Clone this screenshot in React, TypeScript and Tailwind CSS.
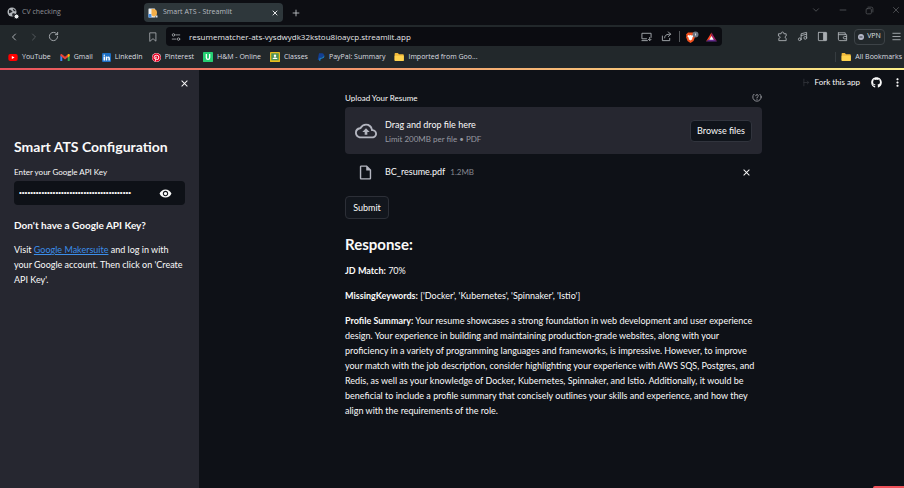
import type { ReactNode } from 'react';
import {
  ChevronDown,
  ChevronLeft,
  ChevronRight,
  Menu,
  Minus,
  Plus,
  RotateCw,
  X,
} from 'lucide-react';
import { FaGithub, FaPinterest } from 'react-icons/fa';
import {
  MdClose,
  MdMoreVert,
  MdOutlineCloudUpload,
  MdOutlineInsertDriveFile,
  MdVisibility,
} from 'react-icons/md';

function Line({ children, className = 'size-[11px]' }: { children: ReactNode; className?: string }) {
  return (
    <svg
      viewBox="0 0 24 24"
      className={className}
      fill="none"
      stroke="currentColor"
      strokeWidth="2"
      strokeLinecap="round"
      strokeLinejoin="round"
      aria-hidden="true"
    >
      {children}
    </svg>
  );
}

function GlobeIcon() {
  return (
    <svg viewBox="0 0 24 24" className="size-[12px]" aria-hidden="true">
      <circle cx="10" cy="10" r="9" fill="#b3b7bb" />
      <path d="M4 6c3-1 4 1 6 2s0 3-2 3-2 3-4 1zM12 3c1 2 4 2 5 4s-2 2-3 1-3-2-2-5zM11 13c2-1 5 0 5 1s-2 4-4 4-2-4-1-5z" fill="#22252a" />
      <circle cx="19" cy="19" r="5" fill="#e9ebed" stroke="#0e1014" strokeWidth="2" />
    </svg>
  );
}

function PageIcon() {
  return (
    <svg viewBox="0 0 20 20" className="size-[10px]" aria-hidden="true">
      <rect x="1" y="1" width="13" height="18" rx="1" fill="#eef2f7" />
      <path d="M1 12h6v7H1z" fill="#4a90e2" />
      <path d="M7 2c7-1 11 1 11 7s-2 8-6 8-6-4-5-8z" fill="#f4b04a" />
      <path d="M15 15h4v4h-4z" fill="#dfe7f3" />
    </svg>
  );
}

function YouTubeIcon() {
  return (
    <svg viewBox="0 0 24 18" className="h-[7px] w-[10px]" aria-hidden="true">
      <rect width="24" height="18" rx="5" fill="#f00" />
      <path d="M9 5v8l7-4z" fill="#fff" />
    </svg>
  );
}

function GmailIcon() {
  return (
    <svg viewBox="0 0 24 18" className="h-[7px] w-[10px]" aria-hidden="true">
      <path d="M0 3v15h5V7z" fill="#4285f4" />
      <path d="M24 3v15h-5V7z" fill="#34a853" />
      <path d="M0 3c0-3 3-4 5-2l7 6 7-6c2-2 5-1 5 2l-1 2-11 9L1 5z" fill="#ea4335" />
      <path d="M19 1c2-2 5-1 5 2v2l-5 4z" fill="#fbbc04" />
    </svg>
  );
}

function LinkedInIcon() {
  return (
    <svg viewBox="0 0 24 24" className="size-[9px]" aria-hidden="true">
      <rect width="24" height="24" rx="3" fill="#1c6fc4" />
      <path d="M4 9h4v11H4zM10 9h4v2c2-3 7-3 7 3v6h-4v-6c0-3-3-2-3 0v6h-4z" fill="#fff" />
      <circle cx="6" cy="6" r="2" fill="#fff" />
    </svg>
  );
}

function LetterUIcon() {
  return (
    <svg viewBox="0 0 24 24" className="size-[10px]" aria-hidden="true">
      <rect width="24" height="24" rx="2" fill="#25cf72" />
      <path d="M8 5v8c0 6 8 6 8 0V5" fill="none" stroke="#fff" strokeWidth="3" />
    </svg>
  );
}

function ClassroomIcon() {
  return (
    <svg viewBox="0 0 24 24" className="size-[10px]" aria-hidden="true">
      <rect width="24" height="24" rx="2" fill="#e9bd1c" />
      <rect x="3" y="3" width="18" height="17" fill="#4f9455" />
      <circle cx="12" cy="9" r="3" fill="#fff" />
      <path d="M6 17c0-5 12-5 12 0z" fill="#fff" />
    </svg>
  );
}

function PayPalIcon() {
  return (
    <svg viewBox="0 0 24 24" className="size-[8px]" aria-hidden="true">
      <path d="M6 1h9c5 0 7 4 5 8-1 4-4 5-8 5H9l-1 7H2z" fill="#123f94" />
      <path d="M21 6c3 6-1 11-8 11h-2l-1 6H6l2-9h4c5 0 8-2 9-8z" fill="#1b84d0" />
    </svg>
  );
}

function FolderIcon() {
  return (
    <svg viewBox="0 0 24 20" className="h-[8px] w-[10px]" aria-hidden="true">
      <path d="M1 2c0-1 1-2 2-2h6l3 3h10c1 0 2 1 2 2v13c0 1-1 2-2 2H3c-1 0-2-1-2-2z" fill="#f0b93a" />
      <path d="M1 7h23v11c0 1-1 2-2 2H3c-1 0-2-1-2-2z" fill="#ffd34f" />
    </svg>
  );
}

function BraveIcon() {
  return (
    <svg viewBox="0 0 28 24" className="h-[12px] w-[14px]" aria-hidden="true">
      <path d="M6 3h10l4 4-1 3 1 2-3 8-6 4-6-4-3-8 1-2-1-3z" fill="#f4511e" />
      <path d="M6 8l3 1 2-1 2 1 3-1 1 3-3 3 1 2-4 3-4-3 1-2-3-3z" fill="#fff" />
      <circle cx="21" cy="7" r="6" fill="#6d7581" />
      <path d="M21 5v4" stroke="#d5d9de" strokeWidth="2" />
    </svg>
  );
}

function BatIcon() {
  return (
    <svg viewBox="0 0 24 22" className="h-[10px] w-[11px]" aria-hidden="true">
      <path d="M12 1L0 21l12-8z" fill="#ff4724" />
      <path d="M12 1l12 20-12-8z" fill="#9e1f63" />
      <path d="M0 21h24l-12-8z" fill="#662d91" />
      <path d="M12 9l5 8H7z" fill="#fff" />
    </svg>
  );
}

const bookmarks: { label: string; icon: ReactNode }[] = [
  { label: 'YouTube', icon: <YouTubeIcon /> },
  { label: 'Gmail', icon: <GmailIcon /> },
  { label: 'LinkedIn', icon: <LinkedInIcon /> },
  { label: 'Pinterest', icon: <FaPinterest className="size-[9px] rounded-full bg-white text-[#e60023]" /> },
  { label: 'H&M - Online', icon: <LetterUIcon /> },
  { label: 'Classes', icon: <ClassroomIcon /> },
  { label: 'PayPal: Summary', icon: <PayPalIcon /> },
  { label: 'Imported from Goo...', icon: <FolderIcon /> },
];

function TabStrip() {
  return (
    <div className="flex h-[25px] items-center bg-[#0d0e13] text-[7px] text-[#8d9196]">
      <button className="flex h-[19px] w-[144px] shrink-0 items-center gap-[3px] pl-[7px]">
        <GlobeIcon />
        CV checking
      </button>
      <div className="flex h-[19px] w-[139px] shrink-0 items-center rounded-[4px] bg-[#2e373b] px-[4px] text-[#b9bdc1]">
        <button className="flex flex-1 items-center gap-[5px]">
          <PageIcon />
          Smart ATS - Streamlit
        </button>
        <button aria-label="Close tab">
          <X className="size-[8px] text-[#e2e4e6]" strokeWidth={3} />
        </button>
      </div>
      <button aria-label="New tab" className="ml-[8px]">
        <Plus className="size-[10px] text-[#c9ccd0]" />
      </button>
      <div className="ml-auto flex items-center gap-[17px] self-start pt-[5px] pr-[3px] text-[#55585c]">
        <button aria-label="Search tabs"><ChevronDown className="size-[10px]" /></button>
        <button aria-label="Minimize"><Minus className="size-[10px]" /></button>
        <button aria-label="Restore">
          <Line className="size-[9px]">
            <rect x="3" y="7" width="14" height="14" rx="3" />
            <path d="M8 3h9a4 4 0 0 1 4 4v9" />
          </Line>
        </button>
        <button aria-label="Close window"><X className="size-[10px]" /></button>
      </div>
    </div>
  );
}

function Toolbar() {
  return (
    <div className="flex h-[23px] items-center text-[#a9adb1]">
      <div className="flex w-[158px] shrink-0 items-center gap-[8px] pl-[8px]">
        <button aria-label="Back"><ChevronLeft className="size-[12px]" /></button>
        <button aria-label="Forward" className="text-[#54595d]"><ChevronRight className="size-[12px]" /></button>
        <button aria-label="Reload"><RotateCw className="size-[11px]" /></button>
        <button aria-label="Bookmark this page" className="ml-auto">
          <Line className="size-[10px]">
            <path d="M5 2h14v20l-7-6-7 6z" />
          </Line>
        </button>
      </div>
      <div className="ml-[8px] flex h-[19px] w-[556px] items-center rounded-[4px] bg-[#0b0c11] px-[5px]">
        <Line className="size-[10px]">
          <circle cx="6" cy="7" r="3" />
          <path d="M12 7h9M3 17h9" />
          <circle cx="18" cy="17" r="3" />
        </Line>
        <input
          aria-label="Address"
          defaultValue="resumematcher-ats-vysdwydk32kstou8ioaycp.streamlit.app"
          className="ml-[8px] min-w-0 flex-1 bg-transparent text-[8px] text-[#e6e8ea] outline-none"
        />
        <div className="flex items-center gap-[9px]">
          <button aria-label="Install app">
            <Line>
              <path d="M12 17H2V5h20v9M2 21h12M19 14v6M16 18l3 3 3-3" />
            </Line>
          </button>
          <button aria-label="Share">
            <Line>
              <path d="M3 11v10h16v-5M8 15c0-6 4-8 13-8M16 2l5 5-5 5" />
            </Line>
          </button>
          <span className="-mx-[2px] h-[11px] w-px bg-[#55585c]" />
          <button aria-label="Shields" className="-mx-[2px]"><BraveIcon /></button>
          <button aria-label="Rewards"><BatIcon /></button>
        </div>
      </div>
      <div className="ml-auto flex shrink-0 items-center gap-[9px] pr-[2px]">
        <button aria-label="Extensions">
          <Line>
            <path d="M4 6h5c-1-5 7-5 6 0h5v5c-3 0-3 5 0 5v5H4v-5c4 0 4-5 0-5z" />
          </Line>
        </button>
        <button aria-label="Media">
          <Line>
            <path d="M9 18V6l12-3v12M9 10l12-3" />
            <circle cx="6" cy="18" r="3" />
            <circle cx="18" cy="15" r="3" />
          </Line>
        </button>
        <button aria-label="Side panel">
          <Line>
            <rect x="3" y="3" width="18" height="18" rx="1" />
            <path d="M15 4h5v16h-5z" fill="currentColor" />
          </Line>
        </button>
        <button aria-label="Wallet">
          <Line>
            <path d="M3 4h15v4M3 4v14c0 2 1 3 3 3h15V8H3M21 12h-5c-3 0-3 5 0 5h5" />
          </Line>
        </button>
        <button className="-mx-[3px] flex h-[16px] w-[31px] items-center justify-center gap-[3px] rounded-[4px] border border-[#3d4347] text-[7px] text-[#dfe1e3]">
          <svg viewBox="0 0 12 12" className="size-[6px]" aria-hidden="true">
            <circle cx="6" cy="6" r="6" fill="#b4b8c8" />
            <path d="M3 6h6" stroke="#353b45" strokeWidth="2" />
          </svg>
          VPN
        </button>
        <button aria-label="Menu"><Menu className="size-[11px]" /></button>
      </div>
    </div>
  );
}

function BookmarksBar() {
  return (
    <nav aria-label="Bookmarks" className="flex h-[20px] items-center gap-[9px] pb-[2px] pl-[8px] text-[7px] text-[#dcdee0]">
      {bookmarks.map((b) => (
        <a key={b.label} href="#" className="flex shrink-0 items-center gap-[4px] whitespace-nowrap">
          {b.icon}
          {b.label}
        </a>
      ))}
      <a href="#" className="ml-auto flex shrink-0 items-center gap-[4px] border-l border-[#363c40] pr-[2px] pl-[5px] whitespace-nowrap">
        <FolderIcon />
        All Bookmarks
      </a>
    </nav>
  );
}

function Sidebar() {
  return (
    <aside className="w-[199px] shrink-0 bg-[#262730] px-[14px] pt-[8px]">
      <div className="-mr-[5px] flex justify-end">
        <button aria-label="Close sidebar"><MdClose className="size-[11px]" /></button>
      </div>
      <h1 className="mt-[48px] text-[14px] leading-[20px] font-bold whitespace-nowrap">Smart ATS Configuration</h1>
      <label htmlFor="api-key" className="mt-[9px] block text-[8px] leading-[12px]">
        Enter your Google API Key
      </label>
      <div className="mt-[3px] flex h-[24px] items-center rounded-[4px] bg-[#0e1117] pr-[13px] pl-[5px]">
        <input
          id="api-key"
          type="password"
          defaultValue="0000000000000000000000000000000000000000"
          className="min-w-0 flex-1 bg-transparent font-['Liberation_Sans',sans-serif] text-[8px] outline-none"
        />
        <button aria-label="Show key"><MdVisibility className="size-[13px]" /></button>
      </div>
      <h2 className="mt-[13px] text-[10px] leading-[15px] font-bold">Don't have a Google API Key?</h2>
      <p className="mt-[9px] text-[9px] leading-[15px]">
        Visit <a href="#" className="text-[#3b8eea] underline">Google Makersuite</a> and log in with your Google account.
        Then click on 'Create API Key'.
      </p>
    </aside>
  );
}

function Uploader() {
  return (
    <section>
      <div className="flex h-[13px] items-start justify-between">
        <label htmlFor="browse" className="text-[8px] leading-[9px]">Upload Your Resume</label>
        <button aria-label="Help" className="flex h-[8px] items-end overflow-hidden text-[#a3a5ab]">
          <Line className="size-[10px] shrink-0">
            <circle cx="12" cy="12" r="10" />
            <path d="M9 9a3 3 0 1 1 4 3l-1 2M12 17v1" />
          </Line>
        </button>
      </div>
      <div className="flex h-[47px] items-center rounded-[4px] bg-[#262730] px-[10px]">
        <MdOutlineCloudUpload className="size-[22px] text-[#b4b6c0]" />
        <div className="ml-[8px] flex-1 pt-[2px]">
          <p className="text-[9px] leading-[15px]">Drag and drop file here</p>
          <p className="text-[8px] leading-[14px] text-[#9799a1]">Limit 200MB per file • PDF</p>
        </div>
        <button id="browse" className="h-[22px] w-[62px] rounded-[4px] border border-[#31343d] bg-[#10141b] text-[9px]">
          Browse files
        </button>
      </div>
      <div className="mt-[9px] flex h-[18px] items-center pr-[10px] pl-[12px]">
        <MdOutlineInsertDriveFile className="size-[17px] text-[#b4b6c0]" />
        <span className="ml-[11px] text-[9px]">BC_resume.pdf</span>
        <span className="ml-[5px] text-[8px] text-[#85878f]">1.2MB</span>
        <button aria-label="Remove file" className="ml-auto"><MdClose className="size-[11px]" /></button>
      </div>
    </section>
  );
}

function Response() {
  return (
    <section className="text-[9px] leading-[15px]">
      <h2 className="text-[15px] leading-[20px] font-bold">Response:</h2>
      <p className="mt-[9px]"><strong>JD Match:</strong> 70%</p>
      <p className="mt-[10px]">
        <strong>MissingKeywords:</strong> ['Docker', 'Kubernetes', 'Spinnaker', 'Istio']
      </p>
      <p className="mt-[10px]">
        <strong>Profile Summary:</strong> Your resume showcases a strong foundation in web development and user
        experience design. Your experience in building and maintaining production-grade websites, along with your
        proficiency in a variety of programming languages and frameworks, is impressive. However, to improve your match
        with the job description, consider highlighting your experience with AWS SQS, Postgres, and Redis, as well as
        your knowledge of Docker, Kubernetes, Spinnaker, and Istio. Additionally, it would be beneficial to include a
        profile summary that concisely outlines your skills and experience, and how they align with the requirements of
        the role.
      </p>
    </section>
  );
}

export default function App() {
  return (
    <div className="relative flex min-h-screen flex-col overflow-hidden bg-[#0e1117]">
      <div className="bg-[#22282b] font-['Open_Sans',sans-serif]">
        <TabStrip />
        <Toolbar />
        <BookmarksBar />
      </div>
      <div className="h-[2px] bg-linear-to-r from-[#e8505b] via-[#f3a871] to-[#fbf08a]" />
      <div className="flex flex-1 font-['Lato',sans-serif] text-[#fafafa]">
        <Sidebar />
        <div className="flex-1">
          <header className="flex h-[24px] items-center justify-end text-[8px]">
            <button className="flex items-center gap-[4px]">
              <Line className="size-[9px] text-[#34373e]">
                <path d="M5 3v18M5 12h12M14 8l4 4-4 4" />
              </Line>
              Fork this app
            </button>
            <a href="#" aria-label="GitHub" className="ml-[11px]"><FaGithub className="size-[11px]" /></a>
            <button aria-label="More options" className="ml-[9px]"><MdMoreVert className="size-[13px]" /></button>
          </header>
          <main className="mx-auto w-full max-w-[421px] pl-[4px]">
            <Uploader />
            <button className="mt-[15px] mb-[15px] h-[23px] w-[44px] rounded-[4px] border border-[#2c2f37] bg-[#12161d] text-[9px]">
              Submit
            </button>
            <Response />
          </main>
        </div>
      </div>
      <div className="absolute right-0 bottom-0 h-[2px] w-[31px] rounded-tl-[2px] bg-[#f0525a]" />
    </div>
  );
}
